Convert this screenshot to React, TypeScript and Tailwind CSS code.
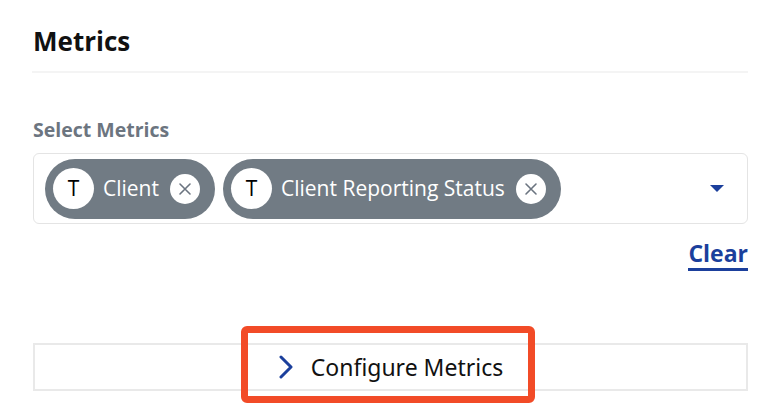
import React from "react";

const font = { fontFamily: "'Open Sans', Lato, sans-serif" };

function XIcon() {
  return (
    <svg width="14" height="14" viewBox="0 0 14 14" fill="none">
      <path d="M2 2L12 12M12 2L2 12" stroke="#6b7480" strokeWidth="1.6" strokeLinecap="round" />
    </svg>
  );
}

function Chip({ label }: { label: string }) {
  return (
    <div className="h-[60px] rounded-full bg-[#717b84] flex items-center pl-[8px] pr-[15px] shrink-0">
      <div className="w-[41px] h-[41px] rounded-full bg-white flex items-center justify-center text-[21px] text-black leading-none">
        T
      </div>
      <span className="ml-[9px] text-white text-[21px] leading-none whitespace-nowrap">{label}</span>
      <div className="ml-[11px] w-[30px] h-[30px] rounded-full bg-white flex items-center justify-center">
        <XIcon />
      </div>
    </div>
  );
}

export default function App() {
  return (
    <div className="w-[778px] h-[416px] bg-white relative pl-[33px] pr-[30px] pt-[24px] overflow-hidden" style={font}>
      <h1 className="text-[26px] font-bold leading-[34px] text-[#111111]">Metrics</h1>
      <div className="mt-[13px] h-[2px] bg-[#f4f4f4] -ml-[1px]" />
      <div className="mt-[45px] text-[19.5px] font-bold text-[#6c7580] leading-[24px]">Select Metrics</div>
      <div className="mt-[11px] h-[71px] border border-[#e4e4e4] rounded-[6px] flex items-center pl-[11px] pr-[23px] gap-[8px]">
        <Chip label="Client" />
        <Chip label="Client Reporting Status" />
        <svg className="ml-auto" width="14" height="8" viewBox="0 0 14 8">
          <path d="M0 0H14L7 7Z" fill="#1b3f9c" />
        </svg>
      </div>
      <div className="flex justify-end mt-[15px]">
        <span className="font-bold text-[23px] leading-[28px] text-[#1b3f9c] border-b-[3px] border-[#1b3f9c] pb-[1px]">Clear</span>
      </div>
      <div className="mt-[72px] h-[48px] border-2 border-[#e9e9e9] flex items-center justify-center gap-[17px]">
        <svg width="16" height="24" viewBox="0 0 16 24" fill="none">
          <path d="M3 2L13 12L3 22" stroke="#1b3f9c" strokeWidth="3" strokeLinecap="round" strokeLinejoin="round" />
        </svg>
        <span className="text-[23px] text-[#111111] leading-none" style={{ fontFamily: "'Noto Sans', sans-serif" }}>
          Configure Metrics
        </span>
      </div>
      <div className="absolute left-[241px] top-[326px] w-[294px] h-[77px] border-[7px] border-[#f24b27] rounded-[6px] pointer-events-none" />
    </div>
  );
}
